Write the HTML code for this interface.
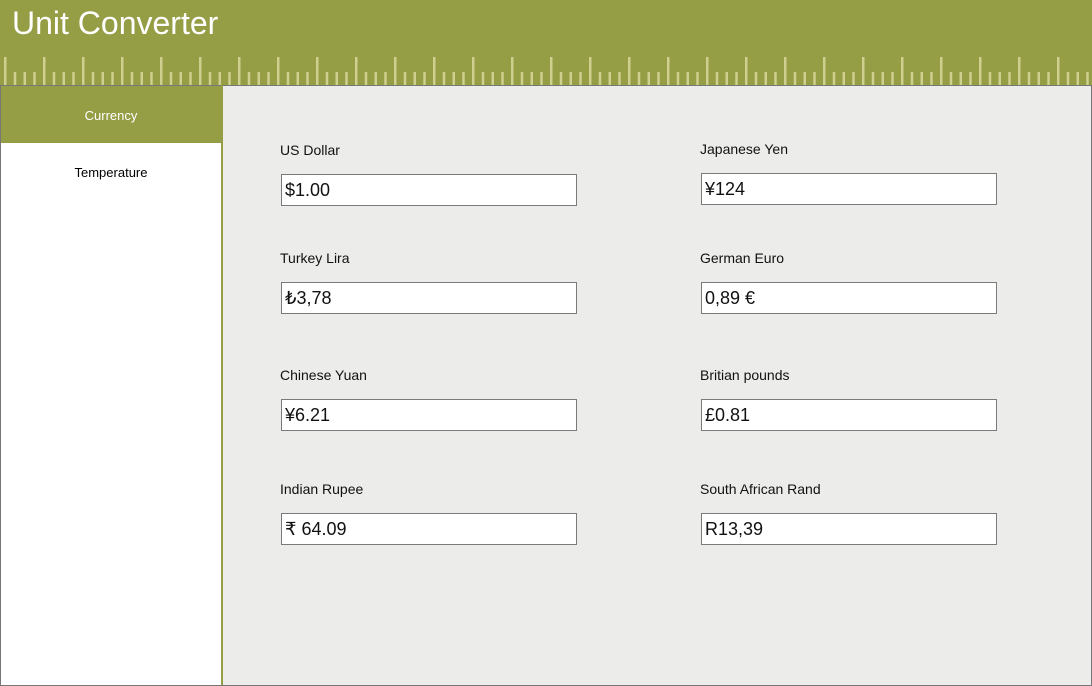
<!DOCTYPE html>
<html><head><style>
body{margin:0;width:1092px;height:686px;overflow:hidden;font-family:"Segoe UI","Liberation Sans",sans-serif;background:#ececea;position:relative}
.hdr{position:absolute;left:0;top:0;width:1092px;height:85px;background:#959d45}
.title{position:absolute;left:12px;top:5px;color:#fff;font-size:32px;}
.side{position:absolute;left:0;top:85px;width:221px;height:600px;background:#fff;border-left:1px solid #777;border-top:1px solid #777;box-sizing:border-box}
.vline{position:absolute;left:221px;top:85px;width:2px;height:601px;background:#959d45}
.bottom{position:absolute;left:0;top:685px;width:1092px;height:1px;background:#777}
.rb{position:absolute;right:0;top:85px;width:1px;height:601px;background:#777}
.topline{position:absolute;left:0;top:85px;width:1092px;height:1px;background:#777}
.sel{position:absolute;left:1px;top:86px;width:220px;height:57px;background:#959d45;color:#fff;font-size:13px;text-align:center;line-height:59px}
.item{position:absolute;left:1px;top:143px;width:220px;height:57px;color:#000;font-size:13px;text-align:center;line-height:59px}
.lbl{position:absolute;font-size:14px;color:#111;margin-top:1px}
.box{position:absolute;width:296px;height:32px;background:#fff;border:1px solid #7a7a7a;font-size:18px;line-height:31px;padding-left:3px;box-sizing:border-box;color:#111}
</style></head><body>
<div class="hdr"><div class="title">Unit Converter</div>
<svg width="1092" height="85" style="position:absolute;left:0;top:0">
<defs><pattern id="p" x="4" y="0" width="39" height="85" patternUnits="userSpaceOnUse">
<rect x="0" y="57" width="2.5" height="28" fill="#cfcf8f"/>
<rect x="9.75" y="72" width="2.5" height="13" fill="#cfcf8f"/>
<rect x="19.5" y="72" width="2.5" height="13" fill="#cfcf8f"/>
<rect x="29.25" y="72" width="2.5" height="13" fill="#cfcf8f"/>
</pattern></defs>
<rect x="0" y="0" width="1092" height="85" fill="url(#p)"/></svg>
</div>
<div class="side"></div>
<div class="topline"></div>
<div class="sel">Currency</div>
<div class="item">Temperature</div>
<div class="vline"></div><div class="rb"></div><div class="bottom"></div>

<div class="lbl" style="left:280px;top:141px">US Dollar</div>
<div class="box" style="left:281px;top:174px">$1.00</div>
<div class="lbl" style="left:700px;top:140px">Japanese Yen</div>
<div class="box" style="left:701px;top:173px">¥124</div>

<div class="lbl" style="left:280px;top:249px">Turkey Lira</div>
<div class="box" style="left:281px;top:282px">₺3,78</div>
<div class="lbl" style="left:700px;top:249px">German Euro</div>
<div class="box" style="left:701px;top:282px">0,89 €</div>

<div class="lbl" style="left:280px;top:366px">Chinese Yuan</div>
<div class="box" style="left:281px;top:399px">¥6.21</div>
<div class="lbl" style="left:700px;top:366px">Britian pounds</div>
<div class="box" style="left:701px;top:399px">£0.81</div>

<div class="lbl" style="left:280px;top:480px">Indian Rupee</div>
<div class="box" style="left:281px;top:513px">₹ 64.09</div>
<div class="lbl" style="left:700px;top:480px">South African Rand</div>
<div class="box" style="left:701px;top:513px">R13,39</div>
</body></html>
